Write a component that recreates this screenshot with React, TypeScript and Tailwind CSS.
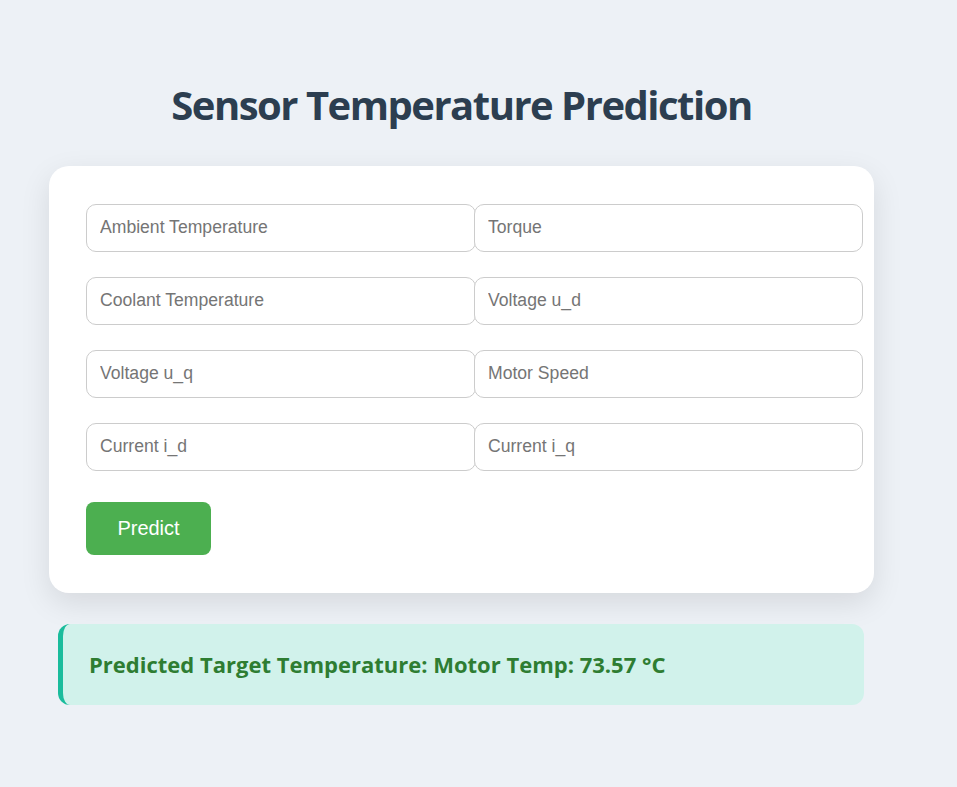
import React from "react";

const fields: [string, string][] = [
  ["Ambient Temperature", "Torque"],
  ["Coolant Temperature", "Voltage u_d"],
  ["Voltage u_q", "Motor Speed"],
  ["Current i_d", "Current i_q"],
];

export default function App() {
  return (
    <div className="min-h-[787px] w-full bg-[#edf1f6] pt-[78px]">
      <div className="ml-[49px] w-[825px]">
        <h1 className="text-center text-[40px] font-bold leading-[54px] text-[#2c3e50] [font-family:'Open_Sans','Noto_Sans',sans-serif] tracking-[-1.5px]">
          Sensor Temperature Prediction
        </h1>
        <div className="mt-[34px] rounded-[20px] bg-white px-[37px] py-[38px] shadow-[0_10px_30px_rgba(0,0,0,0.1)]">
          <div className="grid grid-cols-[388px_388px] gap-y-[25px]">
            {fields.map(([a, b]) => (
              <React.Fragment key={a}>
                <input
                  placeholder={a}
                  className="box-border h-[48px] w-[390px] rounded-[10px] border border-[#cccccc] bg-white px-[13px] pb-[2px] text-[17.6px] text-[#333] placeholder:text-[#757575] outline-none [font-family:'Liberation_Sans',Arial,sans-serif]"
                />
                <input
                  placeholder={b}
                  className="box-border h-[48px] w-[389px] rounded-[10px] border border-[#cccccc] bg-white px-[13px] pb-[2px] text-[17.6px] text-[#333] placeholder:text-[#757575] outline-none [font-family:'Liberation_Sans',Arial,sans-serif]"
                />
              </React.Fragment>
            ))}
          </div>
          <button className="mt-[31px] h-[53px] w-[125px] rounded-[8px] bg-[#4caf50] pb-[2px] text-[20px] text-white [font-family:'Liberation_Sans',Arial,sans-serif]">
            Predict
          </button>
        </div>
        <div className="ml-[9px] mt-[31px] flex h-[81px] w-[806px] items-center rounded-[12px] border-l-[5px] border-[#1abc9c] bg-[#d1f2eb] pl-[26px]">
          <span className="text-[22px] font-bold text-[#2e7d32] [font-family:'Open_Sans','Noto_Sans',sans-serif]">
            Predicted Target Temperature: Motor Temp: 73.57 °C
          </span>
        </div>
      </div>
    </div>
  );
}
